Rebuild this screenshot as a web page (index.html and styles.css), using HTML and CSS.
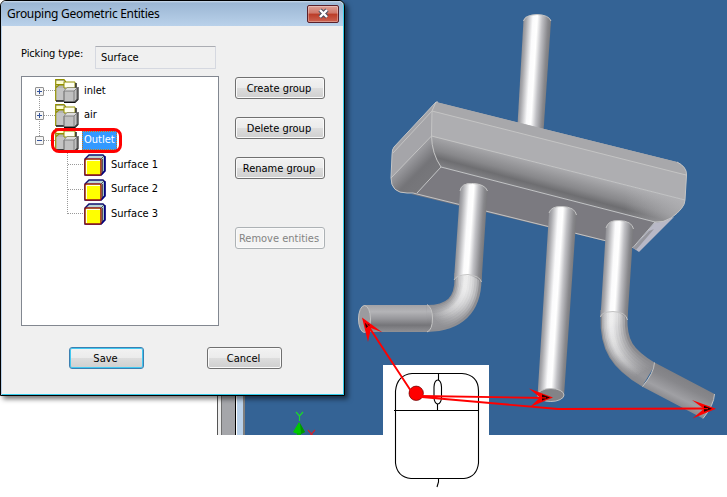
FILE: index.html
```
<!DOCTYPE html>
<html lang="en">
<head>
    <meta charset="UTF-8">
    <title>Grouping Geometric Entities</title>
    <link rel="stylesheet" href="styles.css">
</head>
<body>
    <svg class="symbols" width="0" height="0">
        <symbol id="folder" viewBox="0 0 24 24">
            <path d="M1 1H9L10 4H20V22H1Z" fill="#b4b4b4"/>
            <path d="M1 2H8L10 5H1Z" fill="#ffffd0"/>
            <path d="M1 9H9V22H1Z" fill="#c4c4c4"/>
            <path d="M0.7 22V0.7H9L10.5 2.5V5.5H1M1 8.5L4 6H9" fill="none" stroke="#929000" stroke-width="1.2"/>
            <path d="M9 8V3H20V9H9Z" fill="#fffff0" stroke="#929000" stroke-width="1"/>
            <path d="M1 22H9M21 4V9" stroke="#111" stroke-width="1.4"/>
            <path d="M9 12L12 9H22V20L19 23H9Z" fill="#c0c0c0" stroke="#666" stroke-width="1"/>
            <path d="M9 12L12 9H22L19 12Z" fill="#ddd"/>
            <path d="M9 12H19V23M19 12L22 9" fill="none" stroke="#808080"/>
            <path d="M9 23.4H20L23 20.5V8" fill="none" stroke="#111" stroke-width="1.1"/>
        </symbol>
        <symbol id="surface" viewBox="0 0 22 22">
            <path d="M1 5L5 1H19L21 3V17L17 21H1Z" fill="#b9d6d6" stroke="#101070" stroke-width="1.4"/>
            <path d="M17 5L20 2M18.5 5V19" stroke="#555" stroke-width="1"/>
            <path d="M20.7 2V17L17 21" fill="none" stroke="#000080" stroke-width="1.6"/>
            <rect x="1" y="5" width="16" height="16" rx="1" fill="#ff0" stroke="#8d0d18" stroke-width="1.4"/>
            <path d="M2.4 20V6.4H16" fill="none" stroke="#fff"/>
        </symbol>
    </svg>

    <div class="desktop">
        <svg class="scene" width="727" height="497" viewBox="0 0 727 497">
            <defs>
                <linearGradient id="tube">
                    <stop offset="0" stop-color="#909095"/>
                    <stop offset=".1" stop-color="#a9a9ad"/>
                    <stop offset=".34" stop-color="#fbfbfc"/>
                    <stop offset=".5" stop-color="#fff"/>
                    <stop offset=".68" stop-color="#c0c0c4"/>
                    <stop offset=".9" stop-color="#88888c"/>
                    <stop offset="1" stop-color="#7b7b7e"/>
                </linearGradient>
                <linearGradient id="tubeInlet" href="#tube" gradientUnits="userSpaceOnUse" x1="523.5" y1="20" x2="550.8" y2="21.7"/>
                <linearGradient id="tubeOne" href="#tube" gradientUnits="userSpaceOnUse" x1="460" y1="190" x2="487.2" y2="191.9"/>
                <linearGradient id="tubeTwo" href="#tube" gradientUnits="userSpaceOnUse" x1="549" y1="213" x2="576.4" y2="214.8"/>
                <linearGradient id="tubeThree" href="#tube" gradientUnits="userSpaceOnUse" x1="606" y1="228" x2="633.3" y2="229.7"/>
                <linearGradient id="flat" x2="0" y2="1">
                    <stop offset="0" stop-color="#a2a2a6"/>
                    <stop offset=".25" stop-color="#b4b4b7"/>
                    <stop offset=".5" stop-color="#98989c"/>
                    <stop offset=".75" stop-color="#757579"/>
                    <stop offset="1" stop-color="#919195"/>
                </linearGradient>
                <linearGradient id="roll" gradientUnits="userSpaceOnUse" x1="540" y1="162" x2="531.5" y2="193">
                    <stop offset="0" stop-color="#adadb0"/>
                    <stop offset=".5" stop-color="#88888b"/>
                    <stop offset=".72" stop-color="#6e6e71"/>
                    <stop offset="1" stop-color="#858589"/>
                </linearGradient>
                <linearGradient id="rollRight" gradientUnits="userSpaceOnUse" x1="625" y1="0" x2="685" y2="0">
                    <stop offset="0" stop-color="#b0b0b3" stop-opacity="0"/>
                    <stop offset="1" stop-color="#b0b0b3" stop-opacity=".8"/>
                </linearGradient>
                <linearGradient id="side" gradientUnits="userSpaceOnUse" x1="405" y1="160" x2="426" y2="181">
                    <stop offset="0" stop-color="#a2a2a6"/>
                    <stop offset=".6" stop-color="#747478"/>
                    <stop offset="1" stop-color="#77777b"/>
                </linearGradient>
                <linearGradient id="bendA" gradientUnits="userSpaceOnUse" x1="432" y1="316" x2="464" y2="286">
                    <stop offset="0" stop-color="#fff" stop-opacity=".02"/>
                    <stop offset="1" stop-color="#fff" stop-opacity=".26"/>
                </linearGradient>
                <linearGradient id="bendB" gradientUnits="userSpaceOnUse" x1="612" y1="320" x2="643" y2="372">
                    <stop offset="0" stop-color="#fff" stop-opacity=".28"/>
                    <stop offset="1" stop-color="#fff" stop-opacity=".02"/>
                </linearGradient>
                <linearGradient id="branch" gradientUnits="userSpaceOnUse" x1="685" y1="378" x2="673" y2="402">
                    <stop offset="0" stop-color="#808084"/>
                    <stop offset=".3" stop-color="#87878b"/>
                    <stop offset=".75" stop-color="#a0a0a4"/>
                    <stop offset="1" stop-color="#8c8c90"/>
                </linearGradient>
                <clipPath id="view"><rect x="0" y="0" width="727" height="435"/></clipPath>
            </defs>

            <!-- application window behind the dialog -->
            <rect x="245" width="482" height="435" fill="#346395"/>
            <path d="M217.5 390V435" stroke="#555"/>
            <rect x="218" y="390" width="4" height="45" fill="#eee"/>
            <rect x="221" y="390" width="14" height="45" fill="#a5a6aa"/>
            <path d="M221.5 390V435" stroke="#6f6f6f"/>
            <path d="M235.5 390V435" stroke="#000"/>
            <rect x="237" y="390" width="6" height="45" fill="#b9d1ea"/>
            <rect x="243" y="390" width="2" height="45" fill="#808080"/>

            <!-- axis triad -->
            <g clip-path="url(#view)">
                <path d="M296 412L299.5 416L303 412M299.5 416V421" fill="none" stroke="#1bd52d" stroke-width="1.2"/>
                <path d="M299 422L305 432Q299 436 293 432Z" fill="#00c800"/>
                <path d="M300 423L305 432L301 434Z" fill="#009500"/>
                <rect x="297" y="433" width="4" height="2" fill="#00b400"/>
                <path d="M308 430L315 438M315 430L308 438" stroke="#d0202c" stroke-width="1.2"/>
            </g>

            <!-- inlet pipe and tank -->
            <path d="M523.5 20Q525 15 537 14.500Q549 15 551 21L543.500 131L517.500 125Z" fill="url(#tubeInlet)"/>
            <path d="M523.500 21Q525 15 537 14.500Q549 15 551 21" class="edge"/>
            <path d="M655 222L633 248L639 252L674 217Z" fill="#b8b8c6"/>
            <path d="M649 231L633 248L636 250L654 229Z" fill="#96969d"/>
            <path d="M441 167L655 222L633 248L411 194L417 193Z" fill="#7b7a80"/>
            <path d="M436 102L394 147Q392 149 392 155L391 178Q391 193 407 193H417L441 167L432 137Z" fill="#a5a5a9"/>
            <path d="M431 136L391 178Q391 193 407 193H417L441 167Q431 152 431 136Z" fill="url(#side)"/>
            <path d="M436 102L677 162Q687 166 686.500 176L685 200L431 137L432 111Z" fill="#aeaeb1"/>
            <path d="M436 102L677 162Q686 166 686.500 175L432 111Z" fill="#a8a8ab"/>
            <path d="M431 136L685 200Q684 209 671 218Q662 223 655 222L441 167Q431 152 431 136Z" fill="url(#roll)"/>
            <path d="M610 181L685 200Q684 209 671 218Q662 223 655 222L610 211Z" fill="url(#rollRight)"/>
            <path class="edge" d="M436 102L432 111L431.500 136Q432 154 441 167L655 222Q663 223 671 218Q685 208 685 200L686.500 175Q687 167 677 162M432 111L686 175M431.500 136L685 200M432 111L393 153M431.500 136L391 178M441 167L417 193M438 102L436 102L394 147Q392 149 392 155L391 178Q391 193 407 193H413L633 247.500L655 222"/>

            <!-- first outlet -->
            <rect x="364" y="305" width="66" height="27" fill="url(#flat)"/>
            <g fill="none">
                <path d="M468 273V279Q468 318 427 318.500" stroke="#8e8e92" stroke-width="27"/>
                <path d="M467.500 273V279Q467 317.500 427 318" stroke="url(#bendA)" stroke-width="23"/>
                <path d="M467.500 273V279Q467 317 427 318" stroke="url(#bendA)" stroke-width="19"/>
                <path d="M467 273V279Q466 317 427 317.500" stroke="url(#bendA)" stroke-width="15"/>
                <path d="M467 273V279Q466 316 427 317" stroke="url(#bendA)" stroke-width="11"/>
                <path d="M466.500 273V279Q465 316 427 317" stroke="url(#bendA)" stroke-width="7"/>
                <path d="M466 273V279Q464 315 427 316" stroke="url(#bendA)" stroke-width="4"/>
            </g>
            <path d="M427 304.500Q432.500 308 432.500 318Q432.500 330 427 332Z" fill="url(#flat)"/>
            <path d="M460 191Q461 183 472.500 183Q485 184 487.500 191L481.500 282Q468 270 454 279Z" fill="url(#tubeOne)"/>
            <path class="edge" d="M460 191Q461 183 472.500 183.500Q485 184 487.500 191M454 280Q456 275 468 274.500Q480 276 481.500 282M427 304.500Q432.500 308 432.500 318Q432.500 330 427 332"/>
            <ellipse cx="364.500" cy="319" rx="6" ry="13.500" fill="#9b9b9f" stroke="#c2c2c2"/>

            <!-- second outlet -->
            <path d="M549 213Q551 206 562 206.500Q575 207 576.500 215L564 396H537.500Z" fill="url(#tubeTwo)"/>
            <path class="edge" d="M549 213Q551 206 562 206.500Q575 207 576.500 215"/>
            <ellipse cx="550.800" cy="395" rx="13.200" ry="6.500" fill="#838387" stroke="#c2c2c2"/>

            <!-- third outlet -->
            <g fill="none">
                <path d="M614 310V317C613 345 622 359 649 375" stroke="#8a8a8e" stroke-width="27"/>
                <path d="M613.500 310V317C612 345 621 360 648.500 375.500" stroke="url(#bendB)" stroke-width="23"/>
                <path d="M613 310V317C612 345 621 360 648 376" stroke="url(#bendB)" stroke-width="19"/>
                <path d="M613 310V317C611 345 620 360 648 376" stroke="url(#bendB)" stroke-width="15"/>
                <path d="M612.500 310V317C611 345 620 361 648 377" stroke="url(#bendB)" stroke-width="11"/>
                <path d="M612 310V317C610 345 619 361 647 377" stroke="url(#bendB)" stroke-width="7"/>
                <path d="M611.500 310V317C610 345 619 362 647 378" stroke="url(#bendB)" stroke-width="4"/>
            </g>
            <path d="M654.500 362.500L714.500 394Q714 405 703 418.500L642 386.500Q654 373 654.500 362.500Z" fill="url(#branch)"/>
            <path d="M606 228Q608 220 619 220.500Q632 221 633.500 229L627.500 319Q613 305 600.500 317Z" fill="url(#tubeThree)"/>
            <path class="edge" d="M606 228Q608 220 619 220.500Q632 221 633.500 229M600.500 317Q601 312 613 311.500Q626 312 627.500 320M654.500 362.500Q654 373 642.500 386.500M714.500 394Q714 405 703 418.500"/>

            <!-- mouse -->
            <rect x="383" y="365" width="106" height="132" fill="#fff"/>
            <g fill="none" stroke="#000" stroke-width="1.1">
                <path d="M412 373.500H462Q478.500 375 478.500 391V463Q477 477 464 478.500H411Q397 477 395.500 463V391Q397 375 412 373.500ZM394 410.500H478M438.500 373V380M437.500 404V410M438.500 479V482L437 487"/>
                <rect x="434" y="380" width="7.500" height="24" rx="3.750" ry="7"/>
            </g>

            <!-- picking arrows -->
            <circle cx="416.200" cy="393.300" r="7.200" fill="#f00" stroke="#600" stroke-width=".7"/>
            <path d="M411 391L367 324M421 396L547 398M416 396.500L558 409L708 408.500" fill="none" stroke="#f00" stroke-width="1.900"/>
            <path d="M362 317.500L382.500 332.500L371 328L368 342Z" fill="#f00"/>
            <path d="M553 397.500L529 388.500L540 397.500L530 407Z" fill="#f00"/>
            <path d="M716 408.700L692 400L704 408.700L692.500 418.500Z" fill="#f00"/>
            <path d="M365 323L370 325L366 328ZM550 397.500L542 394.500V400.500ZM712 408.700L704 405.700V411.700Z" fill="#200"/>
            <path d="M370 328L366 323M539 397.800H546M701 408.600H708" stroke="#f00" stroke-width="1.200"/>
        </svg>

        <div class="dialog">
            <div class="title-bar">
                <span>Grouping Geometric Entities</span>
                <button class="close">
                    <svg width="13" height="11" viewBox="0 0 13 11">
                        <path d="M3 2L10 9M10 2L3 9" stroke="#4b5060" stroke-width="4.400"/>
                        <path d="M3 2L10 9M10 2L3 9" stroke="#fff" stroke-width="2.400"/>
                    </svg>
                </button>
            </div>
            <div class="dialog-body">
                <div class="picking">
                    <span class="picking-label">Picking type:</span>
                    <span class="picking-value">Surface</span>
                </div>
                <div class="main">
                    <div class="tree">
                        <svg class="tree-lines" width="80" height="150">
                            <path d="M17.500 18V59M22 13.500H33M22 38.500H33M22 63.500H33M45.500 74V137M46 87.500H61M46 112.500H61M46 136.500H61"/>
                        </svg>
                        <div class="node"><i class="toggle plus"></i><svg class="icon"><use href="#folder"/></svg><span>inlet</span></div>
                        <div class="node"><i class="toggle plus"></i><svg class="icon"><use href="#folder"/></svg><span>air</span></div>
                        <div class="node"><i class="toggle"></i><svg class="icon"><use href="#folder"/></svg><span class="selected">Outlet</span><b class="marker"></b></div>
                        <div class="node child"><svg class="icon"><use href="#surface"/></svg><span>Surface 1</span></div>
                        <div class="node child"><svg class="icon"><use href="#surface"/></svg><span>Surface 2</span></div>
                        <div class="node child"><svg class="icon"><use href="#surface"/></svg><span>Surface 3</span></div>
                    </div>
                    <div class="actions">
                        <button class="btn">Create group</button>
                        <button class="btn">Delete group</button>
                        <button class="btn">Rename group</button>
                        <button class="btn remove" disabled>Remove entities</button>
                    </div>
                </div>
                <div class="footer">
                    <button class="btn default">Save</button>
                    <button class="btn">Cancel</button>
                </div>
            </div>
        </div>
    </div>
</body>
</html>
```
FILE: styles.css
```
* {
    box-sizing: border-box;
}
body {
    margin: 0;
    background: #fff;
    font-family: "DejaVu Sans Condensed", "DejaVu Sans", sans-serif;
    font-stretch: condensed;
    font-size: 11px;
    color: #000;
    overflow: hidden;
}
.symbols {
    position: absolute;
}
.desktop {
    display: grid;
    width: 727px;
    height: 497px;
}
.scene,
.dialog {
    grid-area: 1 / 1;
}
.edge {
    fill: none;
    stroke: #c4c4c4;
    stroke-width: 1;
}
.dialog {
    width: 345px;
    height: 396px;
    border: 1px solid #000;
    border-radius: 6px 6px 0 0;
    background: #f0f0f0;
    box-shadow: inset 1px 0 #b9d1ea, inset -1px -1px #35cbea, 3px 3px 5px rgba(0, 0, 0, 0.55);
}
.title-bar {
    display: flex;
    justify-content: space-between;
    align-items: center;
    height: 25px;
    margin-right: 1px;
    padding: 0 4px 0 6px;
    border-radius: 5px 5px 0 0;
    background: linear-gradient(#cddcec 0, #9cb7d4 2px, #b9d1ea 100%);
    font-family: "Noto Sans", "Open Sans", sans-serif;
    font-size: 12px;
    letter-spacing: -0.28px;
}
.close {
    display: flex;
    align-items: center;
    justify-content: center;
    width: 32px;
    height: 18px;
    padding: 0;
    border: 1px solid #59202a;
    border-radius: 2px;
    background: linear-gradient(#dea095 0, #cf7668 45%, #bb3c27 50%, #cc6250 100%);
    box-shadow: inset 0 0 0 1px rgba(255, 255, 255, 0.3);
}
.dialog-body {
    padding: 20px 18px 0 20px;
}
.picking {
    display: flex;
    height: 30px;
}
.picking-label {
    width: 74px;
    padding-top: 1px;
    letter-spacing: -0.1px;
}
.picking-value {
    width: 121px;
    height: 23px;
    padding: 4px 5px;
    border: 1px solid #d5d8e0;
    border-top-color: #abadb3;
    border-radius: 1px;
}
.main {
    display: flex;
    gap: 16px;
}
.tree {
    position: relative;
    width: 198px;
    height: 250px;
    padding-top: 2px;
    border: 1px solid #828790;
    background: #fff;
}
.tree-lines {
    position: absolute;
    left: 0;
    top: 0;
    fill: none;
    stroke: #999;
    stroke-dasharray: 1 1;
}
.node {
    position: relative;
    display: flex;
    align-items: center;
    height: 24.6px;
    padding-left: 13px;
}
.node.child {
    padding-left: 62px;
}
.toggle {
    width: 9px;
    height: 9px;
    margin-right: 11px;
    border: 1px solid #919191;
    border-radius: 1px;
    background: linear-gradient(#33539c, #33539c) center / 5px 1px no-repeat, #f5f5f5;
}
.toggle.plus {
    background: linear-gradient(#33539c, #33539c) center / 5px 1px no-repeat, linear-gradient(#33539c, #33539c) center / 1px 5px no-repeat, #f5f5f5;
}
.icon {
    width: 24px;
    height: 24px;
    margin-right: 3px;
}
.child .icon {
    width: 22px;
    height: 22px;
    margin-right: 3px;
}
.node span {
    padding: 1px 2px 3px;
}
.node .selected {
    height: 19px;
    padding-top: 2px;
    background: #3399ff;
    color: #fff;
    outline: 1px dotted #c97818;
    outline-offset: -1px;
}
.marker {
    position: absolute;
    left: 29px;
    top: 0;
    width: 71px;
    height: 25px;
    border: 3px solid #f00;
    border-radius: 8px;
}
.actions {
    display: flex;
    flex-direction: column;
    padding-top: 1px;
}
.btn {
    width: 75px;
    height: 22px;
    padding: 0 2px 0 0;
    border: 1px solid #707070;
    border-radius: 3px;
    background: linear-gradient(#f2f2f2 0, #ebebeb 50%, #dddddd 50%, #cfcfcf 100%);
    box-shadow: inset 0 0 0 1px #fafafa;
    font: inherit;
    color: #000;
}
.actions .btn {
    width: 90px;
    margin-bottom: 18px;
}
.actions .remove {
    margin-top: 30px;
    border-color: #adb2b5;
    background: #f4f4f4;
    color: #838383;
}
.footer {
    display: flex;
    gap: 63px;
    padding: 21px 0 0 48px;
}
.btn.default {
    border-color: #3c7fb1;
    box-shadow: inset 0 0 0 1px #43c8f0;
}
```
